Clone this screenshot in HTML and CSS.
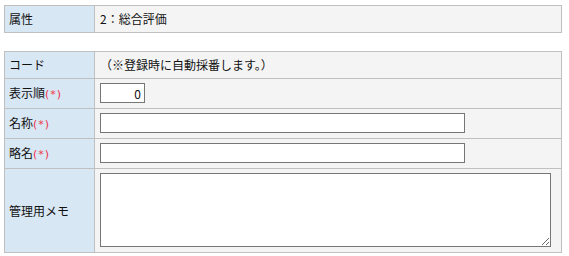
FILE: index.html
```html
<!DOCTYPE html>
<html lang="ja">
<head>
  <meta charset="UTF-8" />
  <title>評価項目登録</title>
  <link rel="stylesheet" href="styles.css">
</head>
<body>
  <table class="form-table head-table">
    <tr>
      <th>属性</th>
      <td>2：総合評価</td>
    </tr>
  </table>

  <table class="form-table">
    <tr>
      <th>コード</th>
      <td>（※登録時に自動採番します。）</td>
    </tr>
    <tr>
      <th>表示順<span class="req">(*)</span></th>
      <td class="ctrl"><input type="text" class="num-input" value="0" /></td>
    </tr>
    <tr>
      <th>名称<span class="req">(*)</span></th>
      <td class="ctrl"><input type="text" class="text-input" /></td>
    </tr>
    <tr>
      <th>略名<span class="req">(*)</span></th>
      <td class="ctrl"><input type="text" class="text-input" /></td>
    </tr>
    <tr>
      <th>管理用メモ</th>
      <td class="ctrl"><textarea class="memo"></textarea></td>
    </tr>
  </table>
</body>
</html>
```

FILE: styles.css
```css
* {
  box-sizing: border-box;
}

body {
  margin: 5px 7px 0 4px;
  font-family: "Noto Sans CJK JP", "Noto Sans", sans-serif;
  font-size: 12px;
  color: #111;
  background: #fff;
}

.form-table {
  width: 558px;
  border-collapse: collapse;
}

.head-table {
  margin-bottom: 18px;
}

.form-table th,
.form-table td {
  border: 1px solid #c0c0c0;
  padding: 4px 4px;
  line-height: 18px;
  text-align: left;
  vertical-align: middle;
  font-weight: normal;
}

.form-table th {
  width: 90px;
  background: #d8e7f4;
}

.form-table td {
  background: #f4f4f4;
  padding-left: 5px;
}

.form-table td.ctrl {
  padding-bottom: 5px;
}

.req {
  color: #f0324b;
  font-family: "DejaVu Sans", sans-serif;
  font-size: 11px;
  letter-spacing: 1px;
}

input,
textarea {
  display: block;
  margin: 0;
  border: 1px solid #767676;
  background: #fff;
  font-family: inherit;
  font-size: 12px;
  color: #111;
  padding: 0 3px;
}

.num-input {
  width: 45px;
  height: 20px;
  text-align: right;
}

.text-input {
  width: 365px;
  height: 20px;
}

.memo {
  width: 451px;
  height: 74px;
  resize: both;
}
```
